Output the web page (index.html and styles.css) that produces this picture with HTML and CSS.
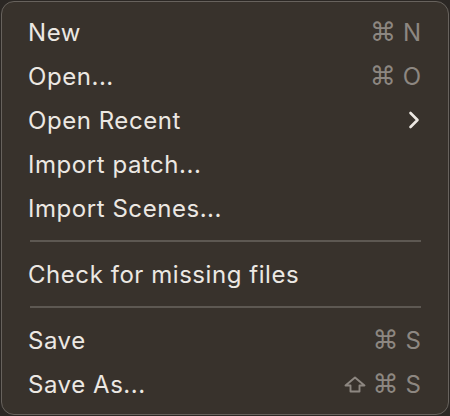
FILE: index.html
```html
<!DOCTYPE html>
<html>
<head>
<meta charset="utf-8">
<link rel="stylesheet" href="styles.css">
</head>
<body>
<div class="menu">
  <div class="item"><span class="label">New</span><span class="keys"><span class="sym">⌘</span><span class="key">N</span></span></div>
  <div class="item"><span class="label">Open...</span><span class="keys"><span class="sym">⌘</span><span class="key">O</span></span></div>
  <div class="item"><span class="label">Open Recent</span>
    <svg class="chev" width="12" height="18" viewBox="0 0 12 18"><path d="M2.5 2 L9.5 9 L2.5 16" fill="none" stroke="#ece8e3" stroke-width="2.6" stroke-linecap="round" stroke-linejoin="round"/></svg>
  </div>
  <div class="item"><span class="label">Import patch...</span></div>
  <div class="item"><span class="label">Import Scenes...</span></div>
  <div class="sep"></div>
  <div class="item"><span class="label">Check for missing files</span></div>
  <div class="sep"></div>
  <div class="item"><span class="label">Save</span><span class="keys"><span class="sym">⌘</span><span class="key">S</span></span></div>
  <div class="item"><span class="label">Save As...</span><span class="keys"><svg class="shift" width="22" height="17" viewBox="0 0 22 17"><path d="M11 1.5 L20.5 9.5 H15.5 V15.5 H6.5 V9.5 H1.5 Z" fill="none" stroke="#8d8781" stroke-width="1.9" stroke-linejoin="round"/></svg><span class="sym">⌘</span><span class="key">S</span></span></div>
</div>
</body>
</html>
```
FILE: styles.css
```css
html, body {
  margin: 0;
  padding: 0;
  background: #2b2724;
  width: 450px;
  height: 416px;
  overflow: hidden;
}
.menu {
  box-sizing: border-box;
  width: 448px;
  height: 414px;
  margin: 1px 1px;
  background: #38322c;
  border: 1px solid #67625d;
  border-radius: 13px;
  padding: 8px 27px 0 26px;
  font-family: Inter, "Noto Sans", sans-serif;
  color: #ece8e3;
}
.item {
  height: 44px;
  display: flex;
  align-items: center;
  justify-content: space-between;
  font-size: 24px;
  letter-spacing: 0.55px;
}
.keys {
  display: flex;
  align-items: center;
  gap: 7px;
  color: #8d8781;
  letter-spacing: 0;
}
.sym {
  font-family: "DejaVu Sans", sans-serif;
  font-size: 26px;
}
.key {
  font-size: 24px;
}
.shift {
  margin-right: 0;
}
.chev {
  margin-right: 1px;
}
.sep {
  height: 22px;
  display: flex;
  align-items: center;
  padding-left: 2px;
}
.sep::before {
  content: "";
  display: block;
  width: 100%;
  height: 2px;
  background: #5d5852;
}
```
